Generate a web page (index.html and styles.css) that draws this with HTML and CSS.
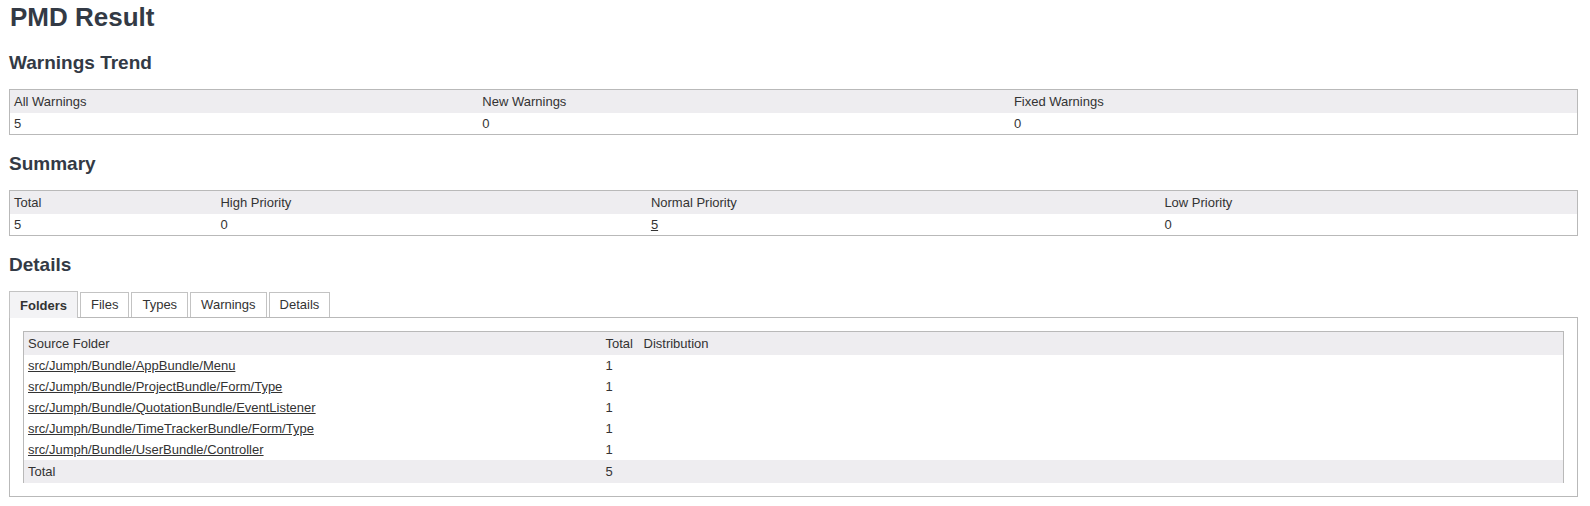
FILE: index.html
```html
<!DOCTYPE html>
<html>
<head>
<meta charset="utf-8">
<title>PMD Result</title>
<link rel="stylesheet" href="styles.css">
</head>
<body>
<h1 class="title">PMD Result</h1>

<h2 class="section">Warnings Trend</h2>
<table class="grid trend">
  <colgroup><col class="t1"><col class="t2"><col class="t3"></colgroup>
  <thead><tr><th>All Warnings</th><th>New Warnings</th><th>Fixed Warnings</th></tr></thead>
  <tbody><tr><td>5</td><td>0</td><td>0</td></tr></tbody>
</table>

<h2 class="section">Summary</h2>
<table class="grid summary">
  <colgroup><col class="s1"><col class="s2"><col class="s3"><col class="s4"></colgroup>
  <thead><tr><th>Total</th><th>High Priority</th><th>Normal Priority</th><th>Low Priority</th></tr></thead>
  <tbody><tr><td>5</td><td>0</td><td><a href="#">5</a></td><td>0</td></tr></tbody>
</table>

<h2 class="section">Details</h2>
<div class="tabs">
  <ul class="tab-list">
    <li class="tab active">Folders</li>
    <li class="tab">Files</li>
    <li class="tab">Types</li>
    <li class="tab">Warnings</li>
    <li class="tab">Details</li>
  </ul>
  <div class="panel">
    <table class="inner">
      <colgroup><col class="c-folder"><col class="c-total"><col class="c-dist"></colgroup>
      <thead><tr><th>Source Folder</th><th>Total</th><th>Distribution</th></tr></thead>
      <tbody>
        <tr><td><a href="#">src/Jumph/Bundle/AppBundle/Menu</a></td><td>1</td><td></td></tr>
        <tr><td><a href="#">src/Jumph/Bundle/ProjectBundle/Form/Type</a></td><td>1</td><td></td></tr>
        <tr><td><a href="#">src/Jumph/Bundle/QuotationBundle/EventListener</a></td><td>1</td><td></td></tr>
        <tr><td><a href="#">src/Jumph/Bundle/TimeTrackerBundle/Form/Type</a></td><td>1</td><td></td></tr>
        <tr><td><a href="#">src/Jumph/Bundle/UserBundle/Controller</a></td><td>1</td><td></td></tr>
      </tbody>
      <tfoot><tr><td>Total</td><td>5</td><td></td></tr></tfoot>
    </table>
  </div>
</div>
</body>
</html>
```

FILE: styles.css
```css
html, body {
  margin: 0;
  background: #ffffff;
}
body {
  padding: 0 12px 0 9px;
  font-family: "Liberation Sans", Arial, sans-serif;
  font-size: 13px;
  color: #333;
}
.title {
  font-size: 26px;
  line-height: 30px;
  font-weight: bold;
  color: #333a45;
  margin: 2px 0 20px 1px;
}
.section {
  font-size: 19px;
  line-height: 22px;
  font-weight: bold;
  color: #333a45;
  margin: 18px 0 15px 0;
}
.grid {
  width: 100%;
  border-collapse: collapse;
  table-layout: fixed;
  border: 1px solid #b9b9b9;
}
.grid th, .grid td {
  text-align: left;
  font-weight: normal;
  padding: 0 4px;
  white-space: nowrap;
}
.grid th {
  background: #eeedf0;
  height: 23px;
}
.grid td {
  height: 21px;
  background: #fff;
}
.t1 { width: 29.9%; }
.t2 { width: 33.9%; }
.t3 { width: 36.2%; }
.s1 { width: 13.2%; }
.s2 { width: 27.45%; }
.s3 { width: 32.75%; }
.s4 { width: 26.6%; }
a {
  color: #333;
  text-decoration: underline;
}
.tabs {
  display: flex;
  flex-direction: column;
}
.tab-list {
  display: flex;
  list-style: none;
  margin: 0;
  padding: 0;
  gap: 2px;
  align-items: flex-end;
}
.tab {
  height: 24px;
  line-height: 24px;
  padding: 0 10px;
  border: 1px solid #c3c3c3;
  border-bottom: none;
  background: #fff;
  color: #333;
}
.tab.active {
  font-weight: bold;
  background: #f3f3f5;
  height: 26px;
  line-height: 27px;
  margin-bottom: -1px;
  position: relative;
  z-index: 1;
}
.panel {
  border: 1px solid #b9b9b9;
  padding: 13px;
}
.inner {
  width: 100%;
  border-collapse: collapse;
  table-layout: fixed;
  border: 1px solid #b9b9b9;
  border-bottom: none;
}
.c-total { width: 38px; }
.c-dist { width: 60%; }
.inner th, .inner td {
  text-align: left;
  font-weight: normal;
  padding: 0 4px;
  white-space: nowrap;
}
.inner th {
  background: #eeedf0;
  height: 23px;
}
.inner td {
  height: 21px;
}
.inner tfoot td {
  background: #eeedf0;
  height: 23px;
}
```
